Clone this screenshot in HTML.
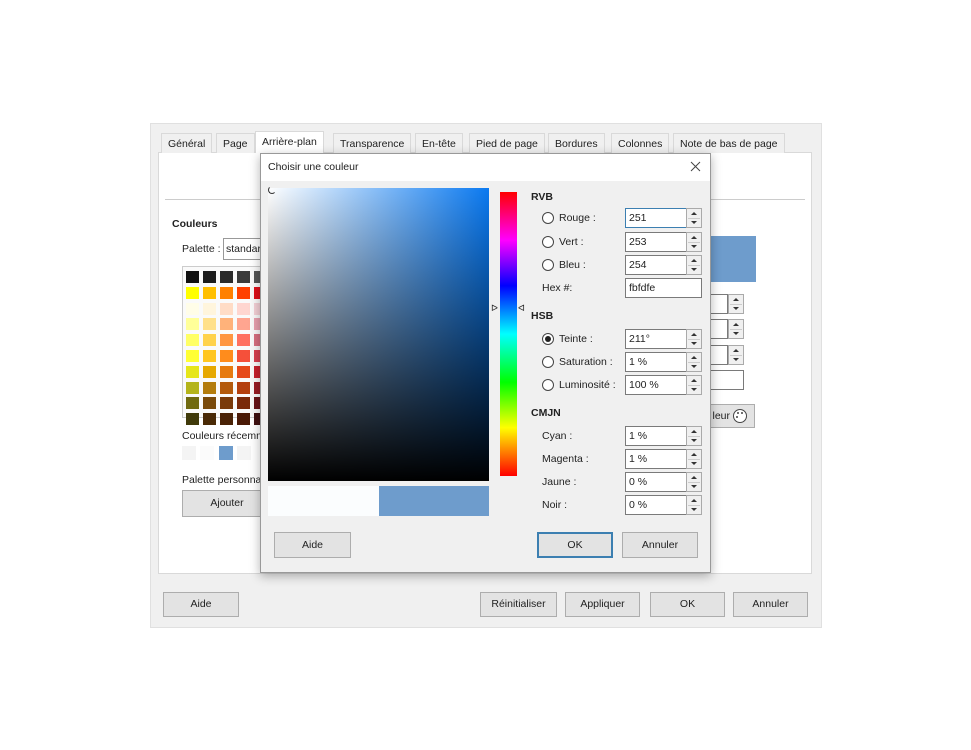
<!DOCTYPE html>
<html><head><meta charset="utf-8"><style>
*{box-sizing:border-box;margin:0;padding:0}
body{width:971px;height:750px;background:#fff;position:relative;overflow:hidden;font-family:"Liberation Sans",sans-serif;font-size:10.5px;color:#222}
.a{position:absolute}
.btn{position:absolute;background:#e3e3e3;border:1px solid #adadad;text-align:center;font-size:10.5px;color:#222}
.inp{position:absolute;background:#fff;border:1px solid #7a7a7a;padding-left:3px;font-size:10.5px;line-height:18px;height:20px}
.spin{position:absolute;width:16px;height:20px;border:1px solid #aaa;background:#f0f0f0}
.spin:before{content:"";position:absolute;left:4px;top:3px;border:3px solid transparent;border-bottom:3px solid #333;border-top:0}
.spin:after{content:"";position:absolute;left:4px;bottom:3px;border:3px solid transparent;border-top:3px solid #333;border-bottom:0}
.spin i{position:absolute;left:1px;right:1px;top:9px;height:1px;background:#ccc}
.rad{position:absolute;width:12px;height:12px;border:1px solid #444;border-radius:50%;background:#fff}
.tab{position:absolute;top:133px;height:20px;line-height:20px;font-size:10.5px;padding:0 6px;border:1px solid #d9d9d9;border-bottom:none;background:#f0f0f0}
</style></head><body>
<div class="a" style="left:150px;top:123px;width:672px;height:505px;background:#f0f0f0;border:1px solid #e0e0e0"></div>
<div class="a" style="left:158px;top:152px;width:654px;height:422px;background:#fff;border:1px solid #d9d9d9"></div>
<div class="tab" style="left:161px">Général</div>
<div class="tab" style="left:216px">Page</div>
<div class="tab" style="left:255px;top:131px;height:22px;background:#fff">Arrière-plan</div>
<div class="tab" style="left:333px">Transparence</div>
<div class="tab" style="left:415px">En-tête</div>
<div class="tab" style="left:469px">Pied de page</div>
<div class="tab" style="left:548px">Bordures</div>
<div class="tab" style="left:611px">Colonnes</div>
<div class="tab" style="left:673px">Note de bas de page</div>
<div class="a" style="left:165px;top:199px;width:640px;height:1px;background:#ccc"></div>
<div class="a" style="left:172px;top:218px;font-weight:bold">Couleurs</div>
<div class="a" style="left:182px;top:243px">Palette :</div>
<div class="a" style="left:223px;top:238px;width:60px;height:22px;border:1px solid #999;padding:4px 2px">standard</div>
<div class="a" style="left:182px;top:266px;width:90px;height:152px;border:1px solid #ccc;background:#fafafa" id="pal"></div>
<div class="a" style="left:182px;top:430px">Couleurs récemment</div>
<div class="a" style="left:182px;top:446px;width:14px;height:14px;background:#f4f4f4"></div>
<div class="a" style="left:200px;top:446px;width:14px;height:14px;background:#fbfbfb"></div>
<div class="a" style="left:219px;top:446px;width:14px;height:14px;background:#6e9ccc"></div>
<div class="a" style="left:237px;top:446px;width:14px;height:14px;background:#f4f4f4"></div>
<div class="a" style="left:182px;top:474px">Palette personnalisée</div>
<div class="btn" style="left:182px;top:490px;width:90px;height:27px;line-height:25px">Ajouter</div>
<div class="a" style="left:706px;top:236px;width:50px;height:46px;background:#6e9ccc"></div>
<div class="inp" style="left:700px;top:294px;width:28px"></div><div class="spin" style="left:728px;top:294px"><i></i></div>
<div class="inp" style="left:700px;top:319px;width:28px"></div><div class="spin" style="left:728px;top:319px"><i></i></div>
<div class="inp" style="left:700px;top:345px;width:28px"></div><div class="spin" style="left:728px;top:345px"><i></i></div>
<div class="inp" style="left:700px;top:370px;width:44px"></div>
<div class="btn" style="left:700px;top:404px;width:55px;height:24px;line-height:22px;text-align:right;padding-right:24px">leur</div>
<svg class="a" style="left:732px;top:408px" width="16" height="16"><circle cx="8" cy="8" r="6.5" fill="#fff" stroke="#444"/><circle cx="6" cy="5" r="1" fill="#444"/><circle cx="10" cy="5" r="1" fill="#444"/><circle cx="5" cy="9" r="1" fill="#444"/></svg>
<div class="btn" style="left:163px;top:592px;width:76px;height:25px;line-height:23px">Aide</div>
<div class="btn" style="left:480px;top:592px;width:77px;height:25px;line-height:23px">Réinitialiser</div>
<div class="btn" style="left:565px;top:592px;width:75px;height:25px;line-height:23px">Appliquer</div>
<div class="btn" style="left:650px;top:592px;width:75px;height:25px;line-height:23px">OK</div>
<div class="btn" style="left:733px;top:592px;width:75px;height:25px;line-height:23px">Annuler</div>

<div class="a" style="left:260px;top:153px;width:451px;height:420px;background:#f0f0f0;border:1px solid #999;box-shadow:0 3px 10px rgba(0,0,0,.3)"></div>
<div class="a" style="left:261px;top:154px;width:449px;height:27px;background:#fff"></div>
<div class="a" style="left:268px;top:161px">Choisir une couleur</div>
<svg class="a" style="left:690px;top:161px" width="11" height="11"><path d="M1 1L10 10M10 1L1 10" stroke="#444" stroke-width="1"/></svg>
<div class="a" style="left:268px;top:188px;width:221px;height:293px;background:linear-gradient(to bottom,rgba(0,0,0,0),#000),linear-gradient(to right,#fff,#0a79f0)"></div>
<div class="a" style="left:268px;top:186px;width:8px;height:8px;border:1px solid #333;border-radius:50%;border-top-color:transparent;border-right-color:transparent"></div>
<div class="a" style="left:500px;top:192px;width:17px;height:284px;background:linear-gradient(to bottom,#f00,#f0f 17%,#00f 33%,#0ff 50%,#0f0 67%,#ff0 83%,#f00)"></div>
<div class="a" style="left:491px;top:303px;font-size:9px">ᐅ</div>
<div class="a" style="left:518px;top:303px;font-size:9px">ᐊ</div>
<div class="a" style="left:268px;top:486px;width:111px;height:30px;background:#fbfdfe"></div>
<div class="a" style="left:379px;top:486px;width:110px;height:30px;background:#6e9ccc"></div>
<div class="a" style="left:531px;top:191px;font-weight:bold">RVB</div>
<div class="rad" style="left:542px;top:212px"></div><div class="a" style="left:559px;top:212px">Rouge :</div>
<div class="rad" style="left:542px;top:236px"></div><div class="a" style="left:559px;top:236px">Vert :</div>
<div class="rad" style="left:542px;top:259px"></div><div class="a" style="left:559px;top:259px">Bleu :</div>
<div class="a" style="left:542px;top:282px">Hex #:</div>
<div class="a" style="left:531px;top:310px;font-weight:bold">HSB</div>
<div class="rad" style="left:542px;top:333px"><div class="a" style="left:2px;top:2px;width:6px;height:6px;border-radius:50%;background:#222"></div></div><div class="a" style="left:559px;top:333px">Teinte :</div>
<div class="rad" style="left:542px;top:356px"></div><div class="a" style="left:559px;top:356px">Saturation :</div>
<div class="rad" style="left:542px;top:379px"></div><div class="a" style="left:559px;top:379px">Luminosité :</div>
<div class="a" style="left:531px;top:407px;font-weight:bold">CMJN</div>
<div class="a" style="left:542px;top:430px">Cyan :</div>
<div class="a" style="left:542px;top:453px">Magenta :</div>
<div class="a" style="left:542px;top:476px">Jaune :</div>
<div class="a" style="left:542px;top:499px">Noir :</div>
<div class="inp" style="left:625px;top:208px;width:62px;border-color:#3c7fb1">251</div><div class="spin" style="left:686px;top:208px"><i></i></div>
<div class="inp" style="left:625px;top:232px;width:62px">253</div><div class="spin" style="left:686px;top:232px"><i></i></div>
<div class="inp" style="left:625px;top:255px;width:62px">254</div><div class="spin" style="left:686px;top:255px"><i></i></div>
<div class="inp" style="left:625px;top:278px;width:77px">fbfdfe</div>
<div class="inp" style="left:625px;top:329px;width:62px">211°</div><div class="spin" style="left:686px;top:329px"><i></i></div>
<div class="inp" style="left:625px;top:352px;width:62px">1 %</div><div class="spin" style="left:686px;top:352px"><i></i></div>
<div class="inp" style="left:625px;top:375px;width:62px">100 %</div><div class="spin" style="left:686px;top:375px"><i></i></div>
<div class="inp" style="left:625px;top:426px;width:62px">1 %</div><div class="spin" style="left:686px;top:426px"><i></i></div>
<div class="inp" style="left:625px;top:449px;width:62px">1 %</div><div class="spin" style="left:686px;top:449px"><i></i></div>
<div class="inp" style="left:625px;top:472px;width:62px">0 %</div><div class="spin" style="left:686px;top:472px"><i></i></div>
<div class="inp" style="left:625px;top:495px;width:62px">0 %</div><div class="spin" style="left:686px;top:495px"><i></i></div>
<div class="btn" style="left:274px;top:532px;width:77px;height:26px;line-height:24px">Aide</div>
<div class="btn" style="left:537px;top:532px;width:76px;height:26px;border:2px solid #3c7fb1;line-height:22px">OK</div>
<div class="btn" style="left:622px;top:532px;width:76px;height:26px;line-height:24px">Annuler</div>
<script>
var c=[["#111","#1c1c1c","#2a2a2a","#3b3b3b","#555"],["#ffff00","#ffbf00","#ff8000","#ff4000","#e0101a"],["#fffde8","#fff5dd","#ffdcc6","#ffd6d0","#f4d0d6"],["#ffff99","#ffe08a","#ffb27a","#ffa590","#e8a0ae"],["#ffff66","#ffd24c","#ff9540","#ff7060","#d87080"],["#ffff33","#ffc620","#ff8c1c","#f5503a","#d84050"],["#e6e619","#e6a800","#e67a10","#e64a1a","#c8202c"],["#b4b41a","#b47c0c","#b45a0c","#b4400e","#9a1c24"],["#706a10","#7a4a0a","#7a3a0a","#7a2a0a","#6a1418"],["#403a0a","#4a2a06","#4a2206","#4a1a06","#401010"]];
var p=document.getElementById('pal'),h='';
for(var r=0;r<10;r++)for(var k=0;k<5;k++)h+='<div class="a" style="left:'+(3+k*17)+'px;top:'+(4+r*15.8)+'px;width:13px;height:12px;background:'+c[r][k]+'"></div>';
p.innerHTML=h;
</script>
</body></html>
